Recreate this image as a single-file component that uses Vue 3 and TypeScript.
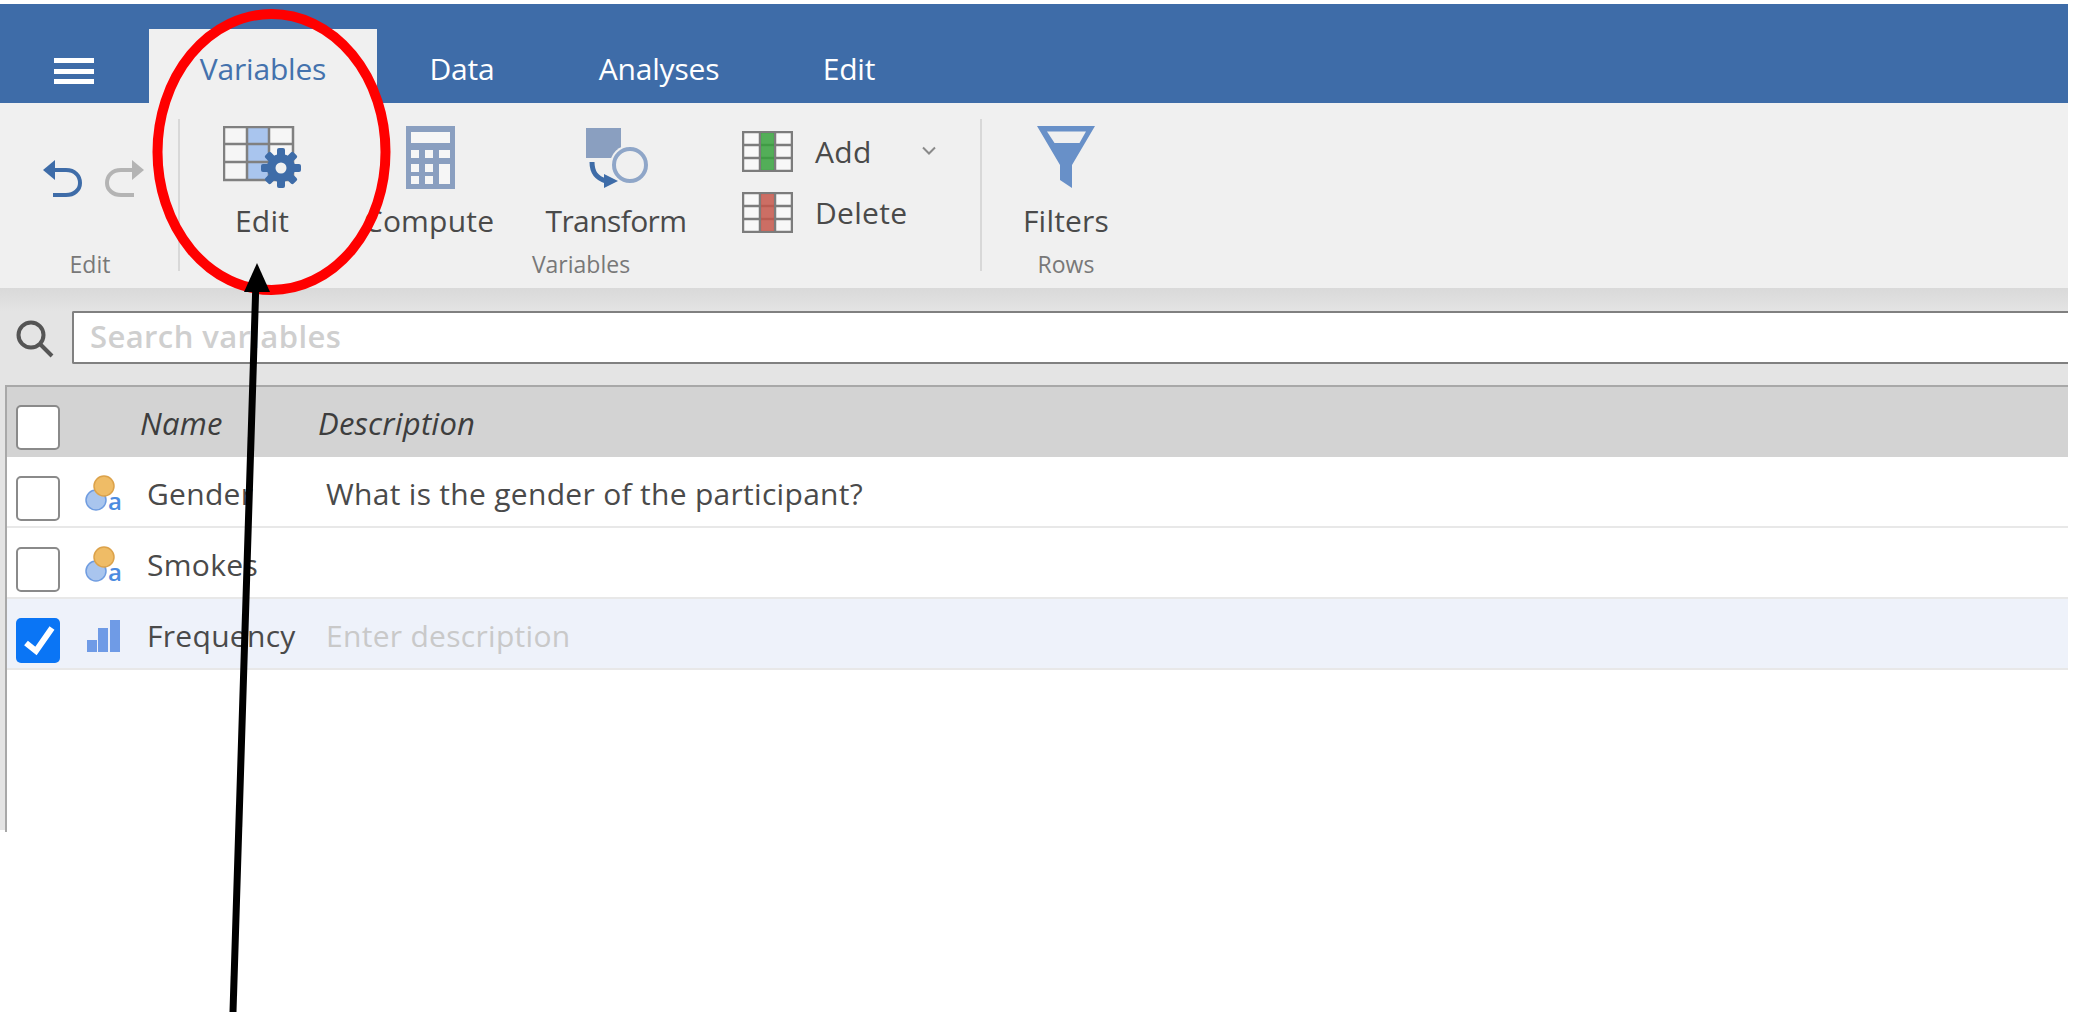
<script setup lang="ts">
interface Variable {
  name: string
  type: "nominal" | "ordinal"
  description: string
  placeholder?: boolean
  selected?: boolean
}

const tabs = ["Data", "Analyses", "Edit"]

const variables: Variable[] = [
  { name: "Gender", type: "nominal", description: "What is the gender of the participant?" },
  { name: "Smokes", type: "nominal", description: "" },
  { name: "Frequency", type: "ordinal", description: "Enter description", placeholder: true, selected: true }
]
</script>

<template>
  <div class="page">
    <header class="topbar">
      <button class="burger"><span></span><span></span><span></span></button>
      <div class="tab active">Variables</div>
      <div v-for="tab in tabs" :key="tab" class="tab" :class="'tab-' + tab.toLowerCase()">{{ tab }}</div>
    </header>

    <section class="ribbon">
      <div class="group group-edit">
        <div class="group-items history">
          <svg width="40" height="40" viewBox="0 0 40 40" fill="none">
            <path d="M8 12H23C32 12 37 18 37 25S31 37 23 37H10" stroke="#3e6ca8" stroke-width="4" />
            <path d="M12 2L0 12L12 22Z" fill="#3e6ca8" />
          </svg>
          <svg width="40" height="40" viewBox="0 0 40 40" fill="none">
            <path d="M32 12H17C8 12 3 18 3 25S9 37 17 37H30" stroke="#b4b4b4" stroke-width="4" />
            <path d="M28 2L40 12L28 22Z" fill="#b4b4b4" />
          </svg>
        </div>
        <div class="group-name">Edit</div>
      </div>

      <div class="group group-variables">
        <div class="group-items">
          <div class="tool tool-edit">
            <svg width="80" height="63" viewBox="0 0 80 63" fill="none">
              <rect x="1" y="1" width="69" height="53" fill="#f6f6f6" />
              <rect x="24" y="1" width="22" height="53" fill="#a9c5ee" />
              <path d="M1 1H70V54H1ZM1 18H70M1 36H70M24 1V54M46 1V54" stroke="#808080" stroke-width="2.500" />
              <g fill="#3e6ca8">
                <circle cx="58" cy="42" r="14" />
                <rect x="54" y="22" width="8" height="40" rx="2" />
                <rect x="38" y="38" width="40" height="8" rx="2" />
                <rect x="54" y="22" width="8" height="40" rx="2" transform="rotate(45 58 42)" />
                <rect x="54" y="22" width="8" height="40" rx="2" transform="rotate(-45 58 42)" />
              </g>
              <circle cx="58" cy="42" r="5.500" fill="#f0f0f0" />
            </svg>
            <span>Edit</span>
          </div>
          <div class="tool tool-compute">
            <svg width="49" height="63" viewBox="0 0 49 63">
              <rect width="49" height="63" fill="#8a9fc0" />
              <rect x="5" y="6" width="39" height="11" fill="#f6f6f6" />
              <g fill="#f6f6f6">
                <rect x="5" y="24" width="8" height="8" /><rect x="19" y="24" width="8" height="8" /><rect x="33" y="24" width="11" height="8" />
                <rect x="5" y="38" width="8" height="8" /><rect x="19" y="38" width="8" height="8" /><rect x="33" y="38" width="11" height="20" />
                <rect x="5" y="50" width="8" height="8" /><rect x="19" y="50" width="8" height="8" />
              </g>
            </svg>
            <span>Compute</span>
          </div>
          <div class="tool tool-transform">
            <svg width="64" height="63" viewBox="0 0 64 63" fill="none">
              <rect x="0" y="2" width="35" height="30" fill="#8a9fc0" />
              <circle cx="44" cy="39" r="20" fill="#f0f0f0" />
              <circle cx="44" cy="39" r="16" stroke="#8fa6c8" stroke-width="4" />
              <path d="M6 36C6 46 10 52 20 55" stroke="#3e6ca8" stroke-width="5" />
              <path d="M18 48L32 55L18 62Z" fill="#3e6ca8" />
            </svg>
            <span>Transform</span>
          </div>
          <div class="stack">
            <div class="stack-row">
              <svg width="51" height="41" viewBox="0 0 51 41" fill="none">
                <rect x="1" y="1" width="49" height="39" fill="#f8f8f8" />
                <path d="M1 1H50V40H1ZM1 14H50M1 27H50M18 1V40M33 1V40" stroke="#7c7c7c" stroke-width="2.500" />
                <rect x="19" y="2" width="13" height="37" fill="#36a13c" opacity=".85" />
              </svg>
              <span>Add</span>
              <svg class="chevron" width="16" height="10" viewBox="0 0 16 10" fill="none">
                <path d="M2 1.500L8 7.500L14 1.500" stroke="#8a8a8a" stroke-width="2" />
              </svg>
            </div>
            <div class="stack-row">
              <svg width="51" height="41" viewBox="0 0 51 41" fill="none">
                <rect x="1" y="1" width="49" height="39" fill="#f8f8f8" />
                <path d="M1 1H50V40H1ZM1 14H50M1 27H50M18 1V40M33 1V40" stroke="#7c7c7c" stroke-width="2.500" />
                <rect x="19" y="2" width="13" height="37" fill="#c4564a" opacity=".85" />
              </svg>
              <span>Delete</span>
            </div>
          </div>
        </div>
        <div class="group-name">Variables</div>
      </div>

      <div class="group group-rows">
        <div class="group-items">
          <div class="tool tool-filters">
            <svg width="58" height="63" viewBox="0 0 58 63" fill="none">
              <path d="M0 0H58L35 39V62L23 54V39Z" fill="#6890c8" />
              <path d="M10 5.500H49L42.500 17H17.500Z" fill="#f0f0f0" />
            </svg>
            <span>Filters</span>
          </div>
        </div>
        <div class="group-name">Rows</div>
      </div>
    </section>

    <section class="search-band">
      <svg class="search-icon" width="40" height="40" viewBox="0 0 40 40" fill="none">
        <circle cx="16" cy="16" r="12.500" stroke="#555" stroke-width="4" />
        <path d="M25 25L37 37" stroke="#555" stroke-width="4" />
      </svg>
      <div class="search-input">Search variables</div>
    </section>

    <section class="table-wrap">
      <div class="table">
        <div class="head">
          <div class="check"></div>
          <span class="head-name">Name</span>
          <span class="head-desc">Description</span>
        </div>
        <div v-for="v in variables" :key="v.name" class="row" :class="{ selected: v.selected }">
          <div class="check" :class="{ checked: v.selected }">
            <svg v-if="v.selected" width="44" height="45" viewBox="0 0 44 45" fill="none">
              <path d="M10 25L20 33L36 10" stroke="#fff" stroke-width="6" />
            </svg>
          </div>
          <div class="type-icon">
            <template v-if="v.type === 'nominal'">
              <svg width="42" height="38" viewBox="0 0 42 38">
                <circle cx="11" cy="26" r="10" fill="#a9c5ee" stroke="#6f9ce0" stroke-width="1.500" />
                <circle cx="19" cy="12" r="10" fill="#efbc66" stroke="#dca24a" stroke-width="1.500" />
              </svg>
              <span class="type-a">a</span>
            </template>
            <svg v-else width="42" height="38" viewBox="0 0 42 38" fill="#6f9be6">
              <rect x="2" y="24" width="10" height="12" />
              <rect x="13" y="12" width="10" height="24" />
              <rect x="25" y="4" width="10" height="32" />
            </svg>
          </div>
          <span class="name">{{ v.name }}</span>
          <span class="desc" :class="{ placeholder: v.placeholder }">{{ v.description }}</span>
        </div>
      </div>
    </section>

    <svg class="annotation" width="2076" height="1017" viewBox="0 0 2076 1017" fill="none">
      <ellipse cx="271.500" cy="152" rx="114" ry="138" stroke="#ff0000" stroke-width="10" />
      <path d="M233 1012L256 280" stroke="#000" stroke-width="7" />
      <path d="M257 263L270 292H244Z" fill="#000" />
    </svg>
  </div>
</template>

<style>
html,
body {
  background: #fff;
}
</style>

<style scoped>
.page {
  position: relative;
  width: 2076px;
  height: 1017px;
  padding: 4px 8px 0 0;
  box-sizing: border-box;
  overflow: hidden;
  background: #fff;
  font-family: "Open Sans", "Noto Sans", sans-serif;
  color: #4a4a4a;
}

.topbar {
  display: flex;
  align-items: flex-end;
  height: 99px;
  background: #3e6ca8;
}

.burger {
  display: flex;
  flex-direction: column;
  justify-content: space-between;
  width: 40px;
  height: 26px;
  margin: 0 55px 19px 54px;
  padding: 0;
  border: 0;
  background: none;
}

.burger span {
  height: 5px;
  background: #fff;
}

.tab {
  height: 74px;
  line-height: 80px;
  font-size: 30px;
  letter-spacing: -0.2px;
  color: #fff;
  text-align: center;
}

.tab.active {
  width: 228px;
  background: #f0f0f0;
  color: #4472ad;
}

.tab-data {
  width: 170px;
}

.tab-analyses {
  width: 224px;
}

.tab-edit {
  width: 156px;
}

.ribbon {
  display: flex;
  height: 185px;
  background: #f0f0f0;
}

.group {
  display: flex;
  flex-direction: column;
  align-items: center;
  position: relative;
}

.group-edit {
  width: 180px;
}

.group-variables {
  width: 802px;
}

.group-rows {
  width: 168px;
}

.group-edit::after,
.group-variables::after {
  content: "";
  position: absolute;
  right: 0;
  top: 16px;
  bottom: 17px;
  width: 2px;
  background: #d8d8d8;
}

.group-items {
  display: flex;
  width: 100%;
  height: 141px;
  padding-top: 23px;
  box-sizing: border-box;
}

.history {
  gap: 21px;
  padding: 55px 0 0 43px;
}

.group-name {
  font-size: 23px;
  line-height: 40px;
  color: #787878;
}

.tool {
  display: flex;
  flex-direction: column;
  align-items: center;
  flex: none;
  font-size: 30px;
  letter-spacing: 0.2px;
  line-height: 32px;
}

.tool svg {
  margin-bottom: 16px;
}

.tool-edit {
  width: 164px;
}

.tool-edit svg {
  margin-left: 2px;
}

.tool-compute {
  width: 170px;
}

.tool-compute svg {
  margin-left: 2px;
}

.tool-transform {
  width: 204px;
  letter-spacing: -0.6px;
}

.tool-transform svg {
  margin-left: 4px;
}

.tool-filters {
  width: 168px;
}

.stack {
  display: flex;
  flex-direction: column;
  gap: 20px;
  margin-left: 24px;
  padding-top: 5px;
}

.stack-row {
  display: flex;
  align-items: center;
  gap: 22px;
  height: 41px;
  font-size: 30px;
  letter-spacing: 0.3px;
}

.chevron {
  margin-left: 27px;
  margin-top: -2px;
}

.search-band {
  display: flex;
  align-items: flex-start;
  height: 97px;
  padding: 23px 0 0 15px;
  box-sizing: border-box;
  background: linear-gradient(#d9d9d9 0, #e4e4e4 24px);
}

.search-icon {
  margin-top: 8px;
}

.search-input {
  flex: 1;
  height: 53px;
  margin-left: 17px;
  padding-left: 16px;
  box-sizing: border-box;
  border: 2px solid #808080;
  border-right: 0;
  border-radius: 2px 0 0 2px;
  background: #fff;
  font-size: 31px;
  font-weight: 600;
  line-height: 47px;
  letter-spacing: 0.4px;
  color: #cfcfcf;
}

.table-wrap {
  height: 445px;
  padding-left: 5px;
  background: linear-gradient(90deg, #e4e4e4 5px, transparent 5px);
}

.table {
  height: 100%;
  border-left: 2px solid #a8a8a8;
  border-top: 2px solid #a8a8a8;
  background: #fff;
}

.head {
  display: flex;
  align-items: center;
  height: 70px;
  background: #d3d3d3;
  font-style: italic;
  font-size: 31px;
  letter-spacing: 0.2px;
  color: #3d3d3d;
}

.check {
  flex: none;
  width: 44px;
  height: 45px;
  margin-left: 9px;
  margin-top: 14px;
  box-sizing: border-box;
  border: 2px solid #8a8a8a;
  border-radius: 5px;
  background: #fff;
}

.check.checked {
  border: 0;
  background: #0a75f5;
}

.head .check {
  margin-top: 11px;
}

.head-name {
  width: 178px;
  margin-left: 80px;
  margin-top: 1px;
}

.head-desc {
  margin-top: 1px;
}

.row {
  display: flex;
  align-items: center;
  height: 71px;
  box-sizing: border-box;
  border-bottom: 2px solid #e8e8e8;
  font-size: 30px;
  letter-spacing: 0.3px;
}

.row.selected {
  background: #eef2fa;
}

.type-icon {
  position: relative;
  flex: none;
  width: 42px;
  height: 38px;
  margin-left: 25px;
  margin-top: 3px;
}

.type-a {
  position: absolute;
  left: 23px;
  top: 15px;
  font-size: 24px;
  font-weight: 600;
  line-height: 24px;
  letter-spacing: 0;
  color: #4c8be0;
}

.name {
  width: 179px;
  margin-left: 20px;
  margin-top: 4px;
}

.desc {
  margin-top: 4px;
}

.placeholder {
  color: #c9c9c9;
}

.annotation {
  position: absolute;
  left: 0;
  top: 0;
  pointer-events: none;
}
</style>
